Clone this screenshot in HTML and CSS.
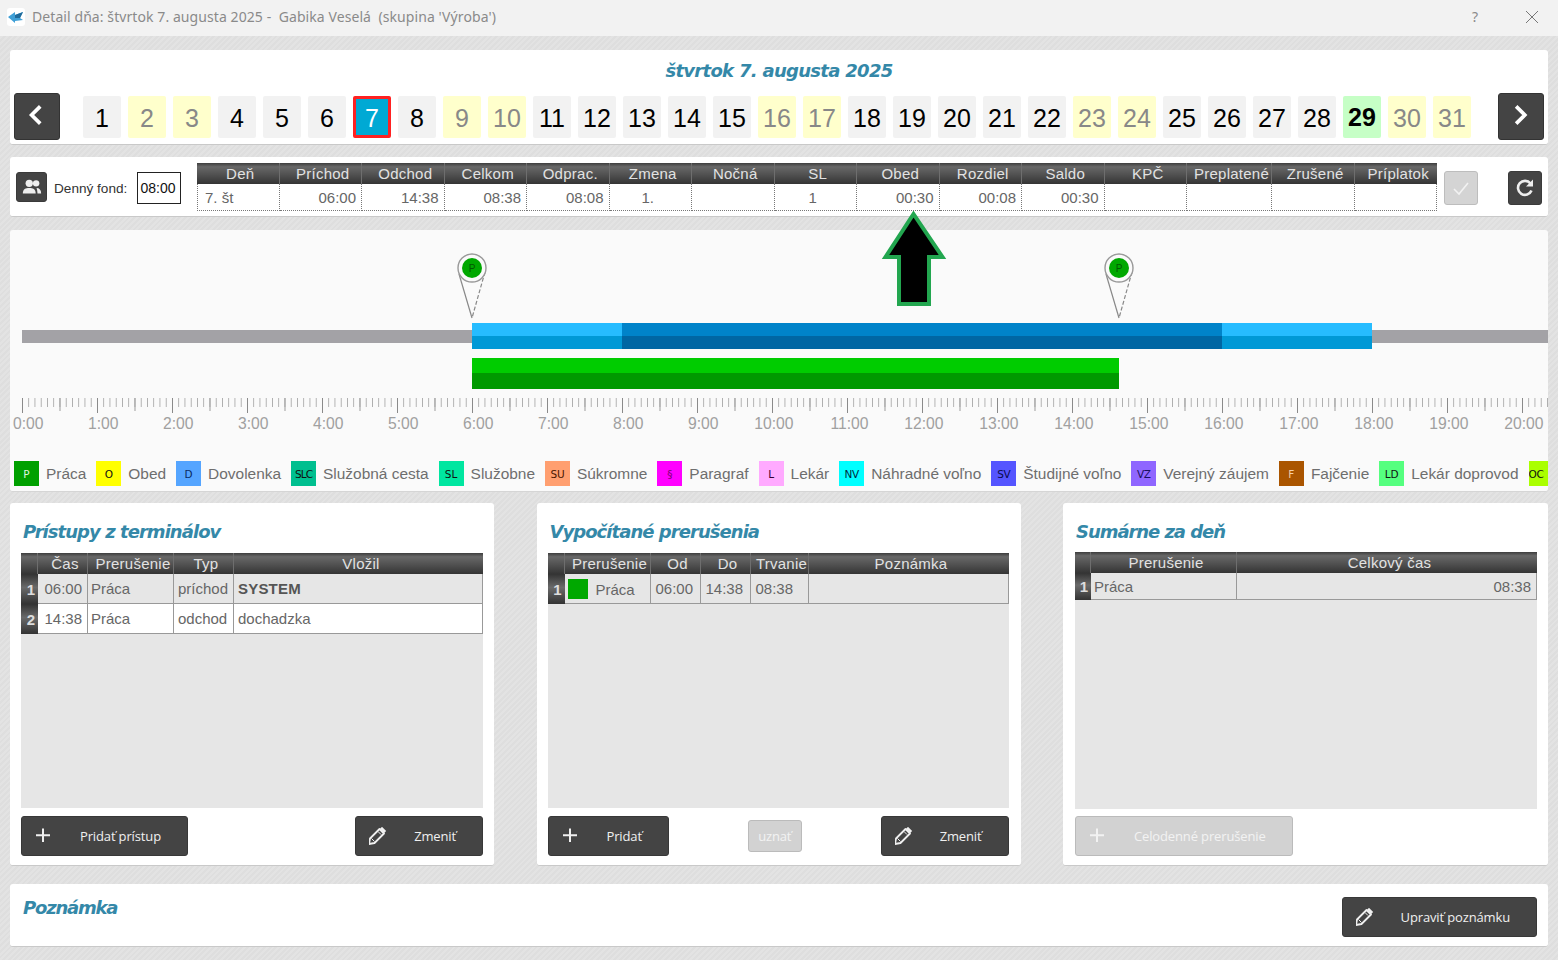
FILE: index.html
```html
<!DOCTYPE html>
<html lang="sk">
<head>
<meta charset="utf-8">
<title>Detail dňa</title>
<link rel="stylesheet" href="styles.css">
</head>
<body>
<header class="titlebar">
  <svg class="appicon" viewBox="0 0 18 18"><rect width="18" height="18" rx="3" fill="#fff"/><path d="M1 9l7-5v3l8-3-3 6 3 2-8 1v2z" fill="#3f9fd6"/><path d="M8 7l8-3-3 6-5 0z" fill="#1f6a9a"/></svg>
  <span class="wintitle">Detail dňa: štvrtok 7. augusta 2025 -  Gabika Veselá  (skupina 'Výroba')</span>
  <span class="help">?</span>
  <svg class="close" viewBox="0 0 14 14"><path d="M1 1l12 12M13 1L1 13" stroke="#777" stroke-width="1" fill="none"/></svg>
</header>

<main class="page">
  <section class="panel calendar">
    <h1 class="cal-title">štvrtok 7. augusta 2025</h1>
    <div class="cal-row">
      <button class="navbtn"><svg viewBox="0 0 24 24"><path d="M15 4l-8 8 8 8" fill="none" stroke="#fff" stroke-width="3.4"/></svg></button>
      <ol class="days">
        <li class="d">1</li><li class="d we">2</li><li class="d we">3</li><li class="d">4</li><li class="d">5</li><li class="d">6</li><li class="d sel">7</li><li class="d">8</li><li class="d we">9</li><li class="d we">10</li><li class="d">11</li><li class="d">12</li><li class="d">13</li><li class="d">14</li><li class="d">15</li><li class="d we">16</li><li class="d we">17</li><li class="d">18</li><li class="d">19</li><li class="d">20</li><li class="d">21</li><li class="d">22</li><li class="d we">23</li><li class="d we">24</li><li class="d">25</li><li class="d">26</li><li class="d">27</li><li class="d">28</li><li class="d today">29</li><li class="d we">30</li><li class="d we">31</li>
      </ol>
      <button class="navbtn"><svg viewBox="0 0 24 24"><path d="M7.500 4l8 8-8 8" fill="none" stroke="#fff" stroke-width="3.4"/></svg></button>
    </div>
  </section>

  <section class="panel summary">
    <button class="iconbtn"><svg viewBox="0 0 24 24"><circle cx="9" cy="8" r="4" fill="#eee"/><circle cx="16.500" cy="8" r="3.500" fill="#eee"/><path d="M2 19c0-5 3-6 7-6s7 1 7 6z" fill="#eee"/><path d="M17 13c3 0 5 2 5 6h-4c0-2-.5-4-1-6z" fill="#eee"/></svg></button>
    <span class="fond-label">Denný fond:</span>
    <span class="fond-box">08:00</span>
    <table class="grid-dots">
      <colgroup><col><col><col><col><col><col><col><col><col><col><col><col><col class="col-pre"><col><col></colgroup>
      <thead><tr><th>Deň</th><th>Príchod</th><th>Odchod</th><th>Celkom</th><th>Odprac.</th><th>Zmena</th><th>Nočná</th><th>SL</th><th>Obed</th><th>Rozdiel</th><th>Saldo</th><th>KPČ</th><th>Preplatené</th><th>Zrušené</th><th>Príplatok</th></tr></thead>
      <tbody><tr><td class="l">7. št</td><td>06:00</td><td>14:38</td><td>08:38</td><td>08:08</td><td class="c">1.</td><td></td><td class="c">1</td><td>00:30</td><td>00:08</td><td>00:30</td><td></td><td></td><td></td><td></td></tr></tbody>
    </table>
    <button class="iconbtn sq off"><svg viewBox="0 0 24 24"><path d="M5 13l5 5 9-11" fill="none" stroke="#f2f2f2" stroke-width="1.600"/></svg></button>
    <button class="iconbtn sq push"><svg viewBox="0 0 24 24"><path d="M18.500 14.500a7 7 0 1 1-1-7" fill="none" stroke="#eee" stroke-width="2.600"/><path d="M20 3.500v7h-7z" fill="#eee"/></svg></button>
  </section>

  <section class="panel timeline">
    <div class="canvas">
      <div class="bar-grey"></div>
      <div class="bar-blue"><span class="seg-light"></span><span class="seg-dark"></span><span class="seg-light"></span></div>
      <div class="bar-green"></div>
      <svg class="pin pin-in" viewBox="0 0 32 70"><use href="#pinshape"/></svg>
      <svg class="pin pin-out" viewBox="0 0 32 70">
        <defs><g id="pinshape">
          <path d="M3 22L16 66" stroke="#888" stroke-width="1.200" fill="none"/>
          <path d="M29 20L16 66" stroke="#888" stroke-width="1.200" stroke-dasharray="4 2" fill="none"/>
          <circle cx="16" cy="16" r="14" fill="#fafafa" stroke="#999" stroke-width="1.400"/>
          <circle cx="16" cy="16" r="10" fill="#00a800"/>
          <text x="16" y="20" text-anchor="middle" class="pin-p">P</text>
        </g></defs>
        <use href="#pinshape"/>
      </svg>
    </div>
    <div class="ruler"></div>
    <div class="hours">
      <span class="h first">0:00</span><span class="h">1:00</span><span class="h">2:00</span><span class="h">3:00</span><span class="h">4:00</span><span class="h">5:00</span><span class="h">6:00</span><span class="h">7:00</span><span class="h">8:00</span><span class="h">9:00</span><span class="h">10:00</span><span class="h">11:00</span><span class="h">12:00</span><span class="h">13:00</span><span class="h">14:00</span><span class="h">15:00</span><span class="h">16:00</span><span class="h">17:00</span><span class="h">18:00</span><span class="h">19:00</span><span class="h">20:00</span>
    </div>
    <ul class="legend">
      <li><i class="k k-p">P</i>Práca</li>
      <li><i class="k k-o">O</i>Obed</li>
      <li><i class="k k-d">D</i>Dovolenka</li>
      <li><i class="k k-slc">SLC</i>Služobná cesta</li>
      <li><i class="k k-sl">SL</i>Služobne</li>
      <li><i class="k k-su">SU</i>Súkromne</li>
      <li><i class="k k-par">§</i>Paragraf</li>
      <li><i class="k k-l">L</i>Lekár</li>
      <li><i class="k k-nv">NV</i>Náhradné voľno</li>
      <li><i class="k k-sv">SV</i>Študijné voľno</li>
      <li><i class="k k-vz">VZ</i>Verejný záujem</li>
      <li><i class="k k-f">F</i>Fajčenie</li>
      <li><i class="k k-ld">LD</i>Lekár doprovod</li>
      <li class="last"><i class="k k-oc">OC</i></li>
    </ul>
  </section>

  <div class="columns">
    <section class="panel card">
      <h2>Prístupy z terminálov</h2>
      <div class="tablewrap">
        <table class="grid t-access">
          <colgroup><col class="w-num"><col class="w-50"><col class="w-86"><col class="w-60"><col></colgroup>
          <thead><tr><th></th><th>Čas</th><th>Prerušenie</th><th>Typ</th><th>Vložil</th></tr></thead>
          <tbody>
            <tr class="alt"><th>1</th><td class="r">06:00</td><td>Práca</td><td>príchod</td><td><b>SYSTEM</b></td></tr>
            <tr><th>2</th><td class="r">14:38</td><td>Práca</td><td>odchod</td><td>dochadzka</td></tr>
          </tbody>
        </table>
      </div>
      <div class="actions">
        <button class="btn"><svg class="ico" viewBox="0 0 18 18"><use href="#plus"/></svg>Pridať prístup</button>
        <button class="btn"><svg class="ico" viewBox="0 0 18 18"><use href="#pencil"/></svg>Zmeniť</button>
      </div>
    </section>

    <section class="panel card second">
      <h2>Vypočítané prerušenia</h2>
      <div class="tablewrap">
        <table class="grid t-calc">
          <colgroup><col class="w-num"><col class="w-86"><col class="w-50"><col class="w-50"><col class="w-58"><col></colgroup>
          <thead><tr><th></th><th>Prerušenie</th><th>Od</th><th>Do</th><th>Trvanie</th><th>Poznámka</th></tr></thead>
          <tbody>
            <tr class="alt"><th>1</th><td class="swatchcell"><i class="swatch"></i>Práca</td><td>06:00</td><td>14:38</td><td>08:38</td><td></td></tr>
          </tbody>
        </table>
      </div>
      <div class="actions">
        <button class="btn"><svg class="ico" viewBox="0 0 18 18"><use href="#plus"/></svg>Pridať</button>
        <button class="btn-small">uznať</button>
        <button class="btn"><svg class="ico" viewBox="0 0 18 18"><use href="#pencil"/></svg>Zmeniť</button>
      </div>
    </section>

    <section class="panel card third">
      <h2>Sumárne za deň</h2>
      <div class="tablewrap">
        <table class="grid t-sum">
          <colgroup><col class="w-num-s"><col class="w-146"><col></colgroup>
          <thead><tr><th></th><th>Prerušenie</th><th>Celkový čas</th></tr></thead>
          <tbody>
            <tr class="alt"><th>1</th><td>Práca</td><td class="r">08:38</td></tr>
          </tbody>
        </table>
      </div>
      <div class="actions">
        <button class="btn disabled"><svg class="ico" viewBox="0 0 18 18"><use href="#plus"/></svg>Celodenné prerušenie</button>
      </div>
    </section>
  </div>

  <section class="panel note">
    <h2>Poznámka</h2>
    <button class="btn"><svg class="ico" viewBox="0 0 18 18"><use href="#pencil"/></svg>Upraviť poznámku</button>
  </section>
</main>

<svg class="arrow" viewBox="0 0 70 100"><path d="M33.500 4L5.500 47H19v47h30V47h13.500z" fill="#000" stroke="#22a64f" stroke-width="4"/></svg>

<svg class="defs" viewBox="0 0 18 18">
  <defs>
    <g id="plus"><path d="M8 1.500v13.500M1 8.300h14" stroke="currentColor" stroke-width="2" fill="none"/></g>
    <g id="pencil" transform="translate(-1.500 0)">
      <path d="M1.500 17l1-5.500L12 2l4.500 4.500L7 16z" fill="none" stroke="currentColor" stroke-width="1.800" stroke-linejoin="round"/>
      <path d="M13.500 .8l4.200 4.200" stroke="currentColor" stroke-width="2.800" fill="none"/>
      <path d="M4 11.500l3 3M10.500 4.500l3 3" stroke="currentColor" stroke-width="1" fill="none"/>
    </g>
  </defs>
</svg>
</body>
</html>
```

FILE: styles.css
```css
* { box-sizing: border-box; }
html, body { margin: 0; padding: 0; }
body {
  position: relative;
  width: 1558px;
  height: 960px;
  overflow: hidden;
  font-family: "Liberation Sans", Arial, sans-serif;
  background: repeating-linear-gradient(135deg, #dedede 0, #dedede 2px, #e3e3e3 2px, #e3e3e3 4px);
}
ol, ul { list-style: none; margin: 0; padding: 0; }
h1, h2 { margin: 0; }
button { font: inherit; padding: 0; cursor: pointer; }

.titlebar {
  height: 36px;
  background: #f2f2f2;
  display: flex;
  align-items: center;
  padding: 0 0 3px 7px;
}
.appicon { width: 18px; height: 18px; margin-right: 7px; }
.wintitle {
  font-family: "Noto Sans", sans-serif;
  font-size: 14px;
  letter-spacing: .08px;
  color: #8a8a8a;
  white-space: pre;
}
.help {
  margin-left: auto;
  margin-right: 47px;
  font-family: "Noto Sans", sans-serif;
  font-size: 14px;
  color: #8a8a8a;
}
.close { width: 14px; height: 14px; margin-right: 19px; }

.page { padding: 14px 10px 0; }
.panel {
  background: #fff;
  border-radius: 3px;
  border-bottom: 1px solid #c9c9c9;
}

.cal-title, .card h2, .note h2 {
  font-family: "DejaVu Sans", sans-serif;
  font-style: italic;
  font-weight: 700;
  color: #3488a8;
}
.calendar { height: 95px; margin-bottom: 12px; }
.cal-title { font-size: 18px; letter-spacing: -.7px; line-height: 24px; padding-top: 9px; height: 43px; text-align: center; }
.cal-row { display: flex; align-items: flex-start; padding: 0 4px; justify-content: space-between; }
.navbtn {
  width: 46px;
  height: 47px;
  background: #444;
  border: 1px solid #333;
  border-radius: 3px;
  display: flex;
  align-items: center;
  justify-content: center;
  padding-bottom: 4px;
}
.navbtn svg { width: 26px; height: 26px; }
.days { display: flex; gap: 7px; padding-top: 3px; margin-right: 4px; }
.d {
  width: 38px;
  height: 42px;
  background: #f2f2f2;
  color: #000;
  font-size: 25px;
  line-height: 44px;
  text-align: center;
  border-radius: 2px;
}
.d.we { background: #ffffcc; color: #888; }
.d.sel { background: #00a9d4; color: #fff; border: 3px solid #f22; line-height: 38px; }
.d.today { background: #c6ffc6; font-weight: 700; line-height: 43px; }

.summary {
  height: 60px;
  margin-bottom: 13px;
  padding: 6px 6px 0;
  display: flex;
  align-items: flex-start;
}
.iconbtn {
  width: 31px;
  height: 30px;
  margin-top: 9px;
  background: #444;
  border: 1px solid #3a3a3a;
  border-radius: 3px;
  display: flex;
  align-items: center;
  justify-content: center;
}
.iconbtn svg { width: 22px; height: 22px; }
.fond-label { font-size: 13.600px; color: #333; margin: 18px 9px 0 7px; width: 74px; white-space: nowrap; }
.fond-box {
  width: 44px;
  height: 32px;
  margin: 9px 16px 0 0;
  padding-right: 2px;
  border: 1.500px solid #222;
  font-size: 14px;
  line-height: 30px;
  text-align: center;
  color: #111;
}
.iconbtn.sq { width: 34px; height: 34px; margin-top: 8px; }
.iconbtn.sq svg { width: 24px; height: 24px; }
.iconbtn.off { background: #d4d4d4; border-color: #bdbdbd; margin-left: 7px; }
.iconbtn.push { margin-left: 30px; }

table { border-collapse: separate; border-spacing: 0; table-layout: fixed; }
thead th {
  height: 21px;
  padding: 0 0 0 5px;
  background: linear-gradient(#3d3d3d, #686868 18%, #4e4e4e 60%, #343434);
  color: #e2e2e2;
  font-size: 15px;
  font-weight: 400;
  letter-spacing: .25px;
  line-height: 20px;
  white-space: nowrap;
  border-right: 1px solid #6e6e6e;
}
thead th:last-child { border-right: 0; }

.grid-dots { width: 1240px; }
.col-pre { width: 85px; }
.grid-dots td {
  height: 27px;
  padding: 0 5px 0 0;
  font-size: 15px;
  color: #666;
  text-align: right;
  border-right: 1px dotted #777;
  border-bottom: 1px dotted #777;
}
.grid-dots td:first-child { border-left: 1px dotted #777; }
.grid-dots td.l { text-align: left; padding-left: 7px; }
.grid-dots td.c { text-align: center; }

.timeline {
  height: 262px;
  margin-bottom: 11px;
  background: #fafafa;
  overflow: hidden;
  border-bottom-color: #d5d5d5;
}
.canvas { position: relative; height: 168px; }
.bar-grey { position: absolute; left: 12px; right: 0; top: 100px; height: 13px; background: #a3a2a6; }
.bar-blue { position: absolute; left: 462px; width: 900px; top: 93px; height: 26px; display: flex; }
.seg-light { width: 150px; background: linear-gradient(#26bcff 50%, #0099d6 50%); }
.seg-dark { width: 600px; background: linear-gradient(#0083c9 50%, #0066a3 50%); }
.bar-green { position: absolute; left: 462px; width: 647px; top: 128px; height: 31px; background: linear-gradient(#00cc00 48%, #009900 48%); }
.pin { position: absolute; top: 22px; width: 32px; height: 70px; }
.pin-in { left: 446px; }
.pin-out { left: 1093px; }
.pin-p { font-size: 10px; font-family: "Liberation Sans", sans-serif; fill: #005a00; }

.ruler {
  margin-left: 12px;
  height: 15px;
  background:
    linear-gradient(to right, #8a8a8a 1px, transparent 1px) 0 0 / 75px 15px repeat-x,
    linear-gradient(to right, #9a9a9a 1px, transparent 1px) 0 0 / 37.500px 13px repeat-x,
    linear-gradient(to right, #aaa 1px, transparent 1px) 0 0 / 6.250px 9px repeat-x;
}
.hours { display: flex; padding: 2px 0 0 3px; }
.h { flex: 0 0 75px; text-align: right; font-size: 15.700px; line-height: 18px; color: #a0a0a0; }
.h.first { flex-basis: 30px; }

.legend { display: flex; margin: 28px 0 0 4px; white-space: nowrap; }
.legend li { display: flex; align-items: center; margin-right: 10px; font-size: 15.450px; color: #6e6e6e; flex: none; }
.legend li.last { margin-right: 0; flex: 0 0 19px; overflow: hidden; }
.k {
  width: 25px;
  height: 25px;
  margin-right: 7px;
  font-family: "DejaVu Sans", sans-serif;
  font-style: normal;
  font-size: 10.500px;
  line-height: 26px;
  text-align: center;
  color: #111;
  flex: none;
}
.k-p { background: #00a000; color: #dff5df; }
.k-o { background: #ffff00; }
.k-d { background: #55a5ff; color: #0a2a60; }
.k-slc { background: #00bf8f; letter-spacing: -.9px; }
.k-sl { background: #00e6a0; }
.k-su { background: #ff9f70; color: #4a1800; letter-spacing: -.3px; }
.k-par { background: #ff00ff; color: #7a0070; }
.k-l { background: #ffaaff; color: #300030; }
.k-nv { background: #00ffff; color: #002a40; letter-spacing: -.3px; }
.k-sv { background: #5555ff; color: #0a0a50; letter-spacing: -.3px; }
.k-vz { background: #8f66ff; color: #1a1060; letter-spacing: -.3px; }
.k-f { background: #aa5500; color: #f5cfa8; }
.k-ld { background: #55ff7f; }
.k-oc { background: #aaff00; margin-right: 0; width: 19px; letter-spacing: -.3px; line-height: 26px; text-align: left; }

.columns { display: flex; justify-content: space-between; margin-bottom: 18px; }
.card { width: 484px; height: 363px; padding: 0 11px; }
.card.second { padding-right: 12px; }
.card.third { width: 485px; padding: 0 11px 0 12px; }
.card h2 { font-size: 18px; letter-spacing: -.95px; line-height: 24px; padding: 17px 0 9px 2px; height: 50px; }
.card.third h2 { height: 49px; letter-spacing: -1.05px; padding-left: 1px; }
.tablewrap { height: 255px; background: #e6e6e6; }
.third .tablewrap { height: 257px; }
.third .actions { margin-top: 7px; }
.grid { width: 100%; }
.w-num { width: 17px; }
.w-num-s { width: 16px; }
.w-50 { width: 50px; }
.w-58 { width: 58px; }
.w-60 { width: 60px; }
.w-86 { width: 86px; }
.w-146 { width: 146px; }
.grid tbody th {
  padding: 0 3px 0 0;
  background: linear-gradient(#333, #6a6a6a 45%, #333);
  color: #ddd;
  font-size: 15px;
  font-weight: 700;
  text-align: right;
}
.grid td {
  height: 30px;
  padding: 0 5px 0 3px;
  font-size: 15px;
  color: #666;
  background: #fff;
  border-right: 1px solid #999;
  border-bottom: 1px solid #999;
  white-space: nowrap;
}
.t-access td:nth-child(4), .t-access td:nth-child(5) { padding-left: 4px; }
.grid tr.alt td { background: #e6e6e6; }
.grid td b { color: #555; letter-spacing: .2px; }
.grid td.r { text-align: right; }
.t-calc td { padding-left: 5px; }
.grid td.swatchcell { padding-left: 3px; }
.swatch { display: inline-block; width: 20px; height: 20px; margin-right: 8px; background: #00a800; vertical-align: -4px; }
.t-sum td { height: 27px; }

.actions { display: flex; justify-content: space-between; align-items: center; margin-top: 8px; }
.btn {
  display: flex;
  align-items: center;
  height: 40px;
  padding: 0 26px 0 13px;
  background: #444;
  border: 1px solid #383838;
  border-radius: 3px;
  color: #f0f0f0;
  font-family: "Open Sans", sans-serif;
  font-size: 13px;
  letter-spacing: -.14px;
  white-space: nowrap;
}
.btn.disabled { background: #d2d2d2; border-color: #bbb; color: #f2f2f2; }
.ico { width: 18px; height: 18px; margin-right: 27px; flex: none; }
.btn-small {
  width: 54px;
  height: 32px;
  background: #d2d2d2;
  border: 1px solid #bbb;
  border-radius: 3px;
  color: #f2f2f2;
  font-family: "Open Sans", sans-serif;
  font-size: 13px;
  letter-spacing: -.2px;
}

.note { height: 63px; display: flex; justify-content: space-between; padding: 13px 11px 0 13px; }
.note h2 { font-size: 18px; letter-spacing: -1.2px; line-height: 22px; }

.arrow { position: absolute; left: 880px; top: 210px; width: 70px; height: 100px; }
.defs { position: absolute; width: 0; height: 0; }
```
